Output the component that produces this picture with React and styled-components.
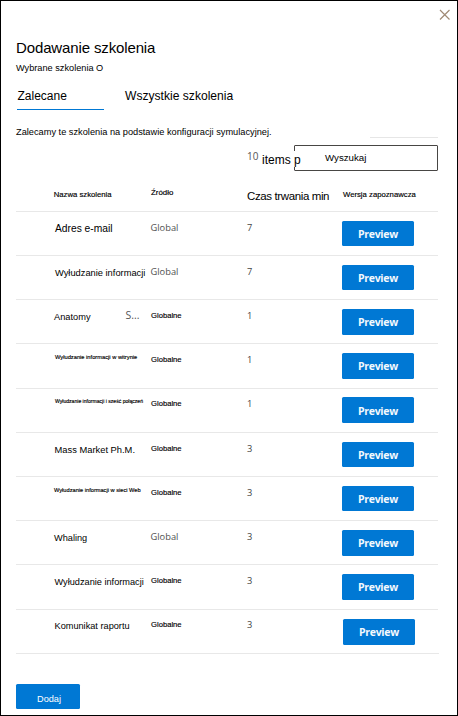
import React from 'react';
import styled, { createGlobalStyle } from 'styled-components';

const GlobalStyle = createGlobalStyle`
  * { box-sizing: border-box; }
  body { margin: 0; background: #fff; }
`;

const sans = '"Liberation Sans", Arial, sans-serif';
const humanist = '"Open Sans", "Noto Sans", sans-serif';
const LINE = 12;

// Top padding that puts the first baseline `base` px below the box's top.
const topFor = ({ $base, $size, $alt }) => {
  const ascent = Math.round($size * ($alt ? 1.069 : 0.905));
  const descent = Math.round($size * ($alt ? 0.293 : 0.212));
  return $base - Math.floor((LINE - ascent - descent) / 2) - ascent;
};

const Text = styled.span`
  display: block;
  white-space: pre;
  font-family: ${(p) => (p.$alt ? humanist : sans)};
  font-size: ${(p) => p.$size}px;
  font-weight: ${(p) => p.$weight || 400};
  line-height: ${LINE}px;
  letter-spacing: ${(p) => p.$track || 0}px;
  color: ${(p) => p.$color || '#000'};
  margin-top: ${topFor}px;
  margin-left: ${(p) => p.$indent || 0}px;
  -webkit-text-stroke: ${(p) => (p.$size < 8 ? 0.15 : 0)}px currentColor;
`;

const Panel = styled.main`
  width: 458px;
  height: 716px;
  display: flex;
  flex-direction: column;
  border: 1px solid #000;
  padding: 0 18px 0 15px;
  background: #fff;
  overflow: hidden;
`;

const TopBar = styled.div`
  height: 29px;
  flex: none;
  display: flex;
  justify-content: flex-end;
  padding-top: 8px;
`;

const CloseButton = styled.button`
  width: 12px;
  height: 12px;
  margin-right: -12px;
  padding: 0;
  border: 0;
  background: none;
  svg { display: block; }
`;

const Line = styled.div`
  height: ${(p) => p.$h}px;
  flex: none;
  display: flex;
  align-items: flex-start;
`;

const Tabs = styled.nav`
  height: 32px;
  flex: none;
  display: flex;
  gap: 20px;
  padding-left: 1px;
`;

const Tab = styled.div`
  display: flex;
  align-items: flex-start;
  width: ${(p) => p.$w}px;
  border-bottom: 1px solid ${(p) => (p.$active ? '#0078d4' : 'transparent')};
`;

const Intro = styled.div`
  height: 28px;
  flex: none;
  display: flex;
  align-items: flex-start;
  justify-content: space-between;
`;

const Rule = styled.div`
  width: 68px;
  height: 28px;
  border-bottom: 1px solid #e6e6e6;
  margin-right: 1px;
`;

const Toolbar = styled.div`
  height: 34px;
  flex: none;
  display: flex;
  align-items: flex-start;
  padding-left: 231px;
`;

const Count = styled.div`
  width: 14px;
  display: flex;
  align-items: flex-start;
`;

const CountLabel = styled.div`
  width: 41px;
  height: 16px;
  margin-top: 13px;
  position: relative;
  z-index: 1;
  display: flex;
  align-items: flex-start;
  background: #fff;
`;

const SearchBox = styled.div`
  width: 144px;
  height: 26px;
  margin: 7px 0 0 -8px;
  display: flex;
  align-items: flex-start;
  border: 1px solid #484644;
  border-radius: 1px;
  padding-left: 30px;
`;

const Row = styled.div`
  height: ${(p) => p.$h}px;
  flex: none;
  display: grid;
  grid-template-columns: 97px 96px 95px 1fr;
  align-items: start;
  padding-left: 38px;
  margin-right: ${(p) => (p.$shift ? 0 : 1)}px;
  border-bottom: 1px solid #e8e8e8;
`;

const Cell = styled.div`
  display: flex;
  align-items: flex-start;
`;

const Button = styled.button`
  width: ${(p) => p.$w}px;
  height: ${(p) => p.$h}px;
  flex: none;
  display: flex;
  align-items: flex-start;
  margin: ${(p) => p.$top}px 0 0 ${(p) => p.$left || 0}px;
  padding: 0;
  border: 0;
  border-radius: 1.5px;
  background: #0078d4;
`;

const rows = [
  { h: 44, bh: 25, name: 'Adres e-mail', size: 10.25, base: 20, x: 1, global: true, min: 7 },
  { h: 44, bh: 25, name: 'Wyłudzanie informacji', size: 9.3, base: 20, x: 1, global: true, min: 7 },
  { h: 44, bh: 26, name: 'Anatomy', size: 9.25, base: 20, x: 0, extra: 'S...', min: 1 },
  { h: 45, bh: 26, name: 'Wyłudzanie informacji w witrynie', size: 5.73, base: 15, x: 1, min: 1 },
  { h: 44, bh: 26, name: 'Wyłudzanie informacji i sześć połączeń', size: 5.08, base: 14, x: 1, min: 1, source: 17, minBase: 18, top: 8, label: 18 },
  { h: 44, bh: 25, name: 'Mass Market Ph.M.', size: 9.35, base: 20, x: 0.5, min: 3 },
  { h: 44, bh: 25, name: 'Wyłudzanie informacji w sieci Web', size: 5.67, base: 15, x: 0, min: 3 },
  { h: 44, bh: 26, name: 'Whaling', size: 9.2, base: 20, x: 0, global: true, min: 3 },
  { h: 45, bh: 26, name: 'Wyłudzanie informacji', size: 9.2, base: 20, x: 0.5, min: 3 },
  { h: 44, bh: 26, name: 'Komunikat raportu', size: 9.2, base: 19, x: 0.5, min: 3, source: 17, minBase: 18, shift: 1 },
];

function TrainingRow({ row }) {
  return (
    <Row $h={row.h} $shift={row.shift}>
      <Cell>
        <Text $size={row.size} $base={row.base} $indent={row.x}>{row.name}</Text>
        {row.extra && (
          <Text $alt $size={10.5} $base={19} $indent={35} $color="#555">{row.extra}</Text>
        )}
      </Cell>
      <Cell>
        {row.global
          ? <Text $alt $size={9.3} $base={19} $indent={-0.5} $color="#505050">Global</Text>
          : <Text $size={7.65} $base={row.source || 18}>Globalne</Text>}
      </Cell>
      <Cell><Text $alt $size={9.3} $base={row.minBase || 19} $color="#444">{row.min}</Text></Cell>
      <Cell>
        <Button $w={72} $h={row.bh} $top={row.top || 9} $left={row.shift}>
          <Text $alt $weight={700} $size={10.5} $track={-0.3} $base={row.label || 17} $indent={16} $color="#f4f9fd">Preview</Text>
        </Button>
      </Cell>
    </Row>
  );
}

export default function App() {
  return (
    <>
      <GlobalStyle />
      <Panel>
        <TopBar>
          <CloseButton aria-label="Zamknij">
            <svg width="12" height="12" viewBox="0 0 12 12" fill="none" stroke="#a08a74" strokeWidth="1.2">
              <path d="M1 1L10.5 10.5M10.5 1L1 10.5" />
            </svg>
          </CloseButton>
        </TopBar>
        <Line $h={28}><Text $size={15} $base={23} $track={-0.13}>Dodawanie szkolenia</Text></Line>
        <Line $h={20}><Text $size={9.2} $base={13}>Wybrane szkolenia O</Text></Line>
        <Tabs>
          <Tab $w={87} $active><Text $size={12} $base={22} $indent={0.5}>Zalecane</Text></Tab>
          <Tab $w={112}><Text $size={12.1} $base={22} $indent={1}>Wszystkie szkolenia</Text></Tab>
        </Tabs>
        <Intro>
          <Text $size={9.24} $base={25}>
            Zalecamy te szkolenia na podstawie konfiguracji symulacyjnej.
          </Text>
          <Rule />
        </Intro>
        <Toolbar>
          <Count><Text $alt $size={10} $base={22} $color="#555">10</Text></Count>
          <CountLabel><Text $size={12} $base={13} $indent={1}>items p</Text></CountLabel>
          <SearchBox><Text $size={9.7} $base={15}>Wyszukaj</Text></SearchBox>
        </Toolbar>
        <Row $h={40}>
          <Cell><Text $size={7.73} $base={25} $indent={-0.3}>Nazwa szkolenia</Text></Cell>
          <Cell><Text $size={7.9} $base={23}>Źródło</Text></Cell>
          <Cell><Text $size={11.5} $base={28} $track={-0.38}>Czas trwania min</Text></Cell>
          <Cell><Text $size={7.73} $base={25} $indent={1}>Wersja zapoznawcza</Text></Cell>
        </Row>
        {rows.map((row, i) => <TrainingRow key={i} row={row} />)}
        <Button $w={64} $h={25} $top={30}>
          <Text $size={9.2} $base={18} $indent={21} $color="#fff">Dodaj</Text>
        </Button>
      </Panel>
    </>
  );
}
